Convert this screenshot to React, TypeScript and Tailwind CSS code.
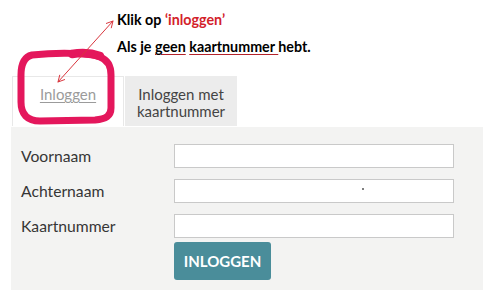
import React from "react";

export default function App() {
  const font = { fontFamily: 'Lato, "Liberation Sans", sans-serif' };
  return (
    <div className="relative w-[489px] h-[301px] bg-white overflow-hidden" style={font}>
      {/* instructions */}
      <div className="pl-[117px] pt-[11px] text-[14.3px] leading-[17px] font-bold text-black">
        <div>
          Klik op <span className="text-[#d3212a]">‘inloggen’</span>
        </div>
        <div className="mt-[10px]">
          Als je{" "}
          <span className="underline decoration-[#b3222a] underline-offset-2">geen</span>{" "}
          <span className="underline decoration-[#b3222a] underline-offset-2">kaartnummer </span>hebt.
        </div>
      </div>

      {/* tabs */}
      <div className="flex ml-[12px] mt-[21px] h-[50px] gap-[1px]">
        <div className="w-[112px] bg-white border-l border-t border-r border-[#e8e8e8] pt-[9px] text-center text-[15px] leading-[17px] text-[#9b9b9b]">
          <span className="underline underline-offset-2">Inloggen</span>
        </div>
        <div className="w-[112px] bg-[#ececec] pt-[10px] text-center text-[15px] leading-[17px] text-[#444]">
          Inloggen met
          <br />
          kaartnummer
        </div>
      </div>

      {/* panel */}
      <div className="ml-[11px] mt-[1px] w-[472px] h-[163px] bg-[#f3f3f2] pl-[10px] pt-[17px]">
        <div className="flex flex-col gap-[11px]">
          {["Voornaam", "Achternaam", "Kaartnummer"].map((l, i) => (
            <div key={l} className="flex items-center">
              <div className="w-[153px] text-[15.7px] leading-[18px] text-[#363636]">{l}</div>
              <div className="relative w-[280px] h-[24px] bg-white border border-[#c9c9c9]">
                {i === 1 && (
                  <span className="absolute left-[187px] top-[8px] w-[2px] h-[2px] rounded-full bg-[#555]" />
                )}
              </div>
            </div>
          ))}
        </div>
        <div className="ml-[153px] mt-[4px] w-[97px] h-[38px] rounded-[3px] bg-[#4a8d9a] flex items-center justify-center text-white font-bold text-[15px]">
          INLOGGEN
        </div>
      </div>

      {/* annotations */}
      <svg className="absolute inset-0 pointer-events-none" width="489" height="301" viewBox="0 0 489 301">
        <path
          d="M 32 55 C 60 52, 90 53, 100 57 C 108 60, 111 66, 111 75 L 111 108 C 111 116, 106 119, 95 120 L 40 121 C 27 121, 21 114, 21 102 L 21 75 C 21 64, 24 57, 32 55 Z"
          fill="none"
          stroke="#e4175c"
          strokeWidth="7"
          strokeLinejoin="round"
        />
        <path d="M 72 54 C 82 52, 92 53, 100 56" fill="none" stroke="#e4175c" strokeWidth="8.5" strokeLinecap="round" />
        <g stroke="#d9363e" strokeWidth="1" fill="none" strokeLinecap="round">
          <line x1="58" y1="82" x2="113" y2="21" />
          <polyline points="106.4,23.4 113,21 111.3,27.8" />
          <polyline points="64.6,79.6 58,82 59.7,75.2" />
        </g>
      </svg>
    </div>
  );
}
